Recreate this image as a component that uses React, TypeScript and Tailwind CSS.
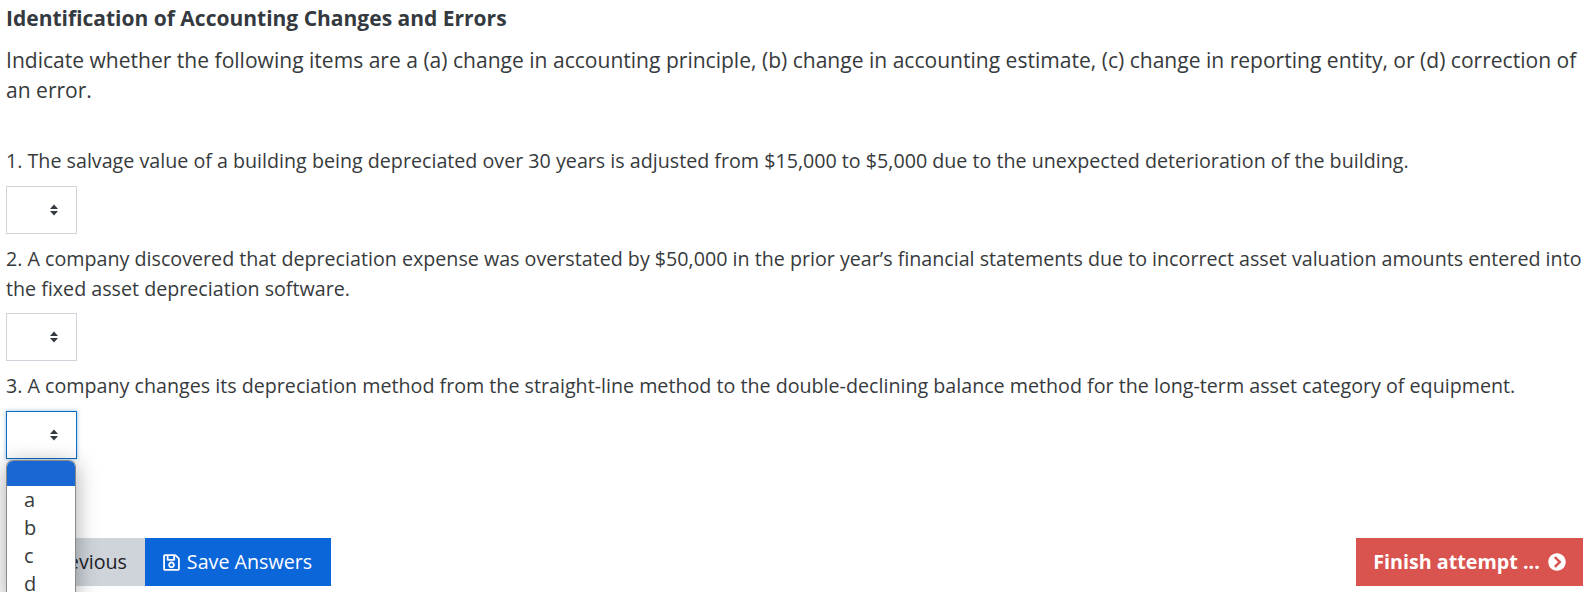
import { FaChevronCircleRight, FaRegSave } from "react-icons/fa";

const SelectBox = ({ focused }: { focused?: boolean }) => (
  <div
    className={
      focused
        ? "w-[71px] h-[48px] border border-[#0f6cbf] shadow-[0_0_4px_rgba(15,108,191,0.45)] flex items-center justify-end pr-[17px] bg-white"
        : "w-[71px] h-[48px] border border-[#ced4da] flex items-center justify-end pr-[17px] bg-white"
    }
  >
    <svg width="10" height="12" viewBox="0 0 10 12" className="fill-[#343a40]">
      <path d="M5 0.5 L9 5 L1 5 Z M5 11.5 L9 7 L1 7 Z" />
    </svg>
  </div>
);

export default function App() {
  return (
    <div className="w-[1587px] h-[592px] overflow-hidden bg-white text-[#373a3c] font-['Open_Sans',sans-serif] text-[19.68px] pl-[6px] relative flex flex-col">
      <h3 className="text-[21px] leading-[30px] font-bold mt-[3px] text-[#343a40]">
        Identification of Accounting Changes and Errors
      </h3>
      <p className="text-[21.05px] leading-[30px] mt-[12px] w-[1581px]">
        Indicate whether the following items are a (a) change in accounting principle, (b) change in accounting estimate, (c) change in reporting entity, or (d) correction of an error.
      </p>
      <p className="leading-[30px] mt-[41px]">
        1. The salvage value of a building being depreciated over 30 years is adjusted from $15,000 to $5,000 due to the unexpected deterioration of the building.
      </p>
      <div className="mt-[10px]"><SelectBox /></div>
      <p className="leading-[30px] mt-[10px] w-[1581px]">
        2. A company discovered that depreciation expense was overstated by $50,000 in the prior year’s financial statements due to incorrect asset valuation amounts entered into the fixed asset depreciation software.
      </p>
      <div className="mt-[9px]"><SelectBox /></div>
      <p className="leading-[30px] mt-[10px]">
        3. A company changes its depreciation method from the straight-line method to the double-declining balance method for the long-term asset category of equipment.
      </p>
      <div className="mt-[10px]"><SelectBox focused /></div>

      <div className="mt-[79px] flex justify-between pr-[4px]">
        <div className="flex">
          <button className="h-[48px] w-[139px] bg-[#ced4da] text-[#1d2125] pl-[38px] text-right pr-[18px]">Previous</button>
          <button className="h-[48px] w-[186px] bg-[#0b66d9] text-white flex items-center justify-center gap-[6px] pr-[2px]">
            <FaRegSave size={19} />
            Save Answers
          </button>
        </div>
        <button className="h-[48px] w-[227px] bg-[#d9534f] text-white font-bold text-[19.7px] flex items-center justify-center gap-[8px]">
          Finish attempt ...
          <FaChevronCircleRight size={18} />
        </button>
      </div>

      <div className="absolute left-[6px] top-[460px] w-[70px] h-[140px] bg-white rounded-t-[7px] border-x border-t border-[#8a8a8a] shadow-[0_4px_22px_rgba(0,0,0,0.35)] overflow-hidden text-[20px] text-[#373a3c]">
        <div className="h-[25px] bg-[#1a66d2]" />
        <div className="pl-[17px] leading-[28px]">
          <div>a</div>
          <div>b</div>
          <div>c</div>
          <div>d</div>
        </div>
      </div>
    </div>
  );
}
